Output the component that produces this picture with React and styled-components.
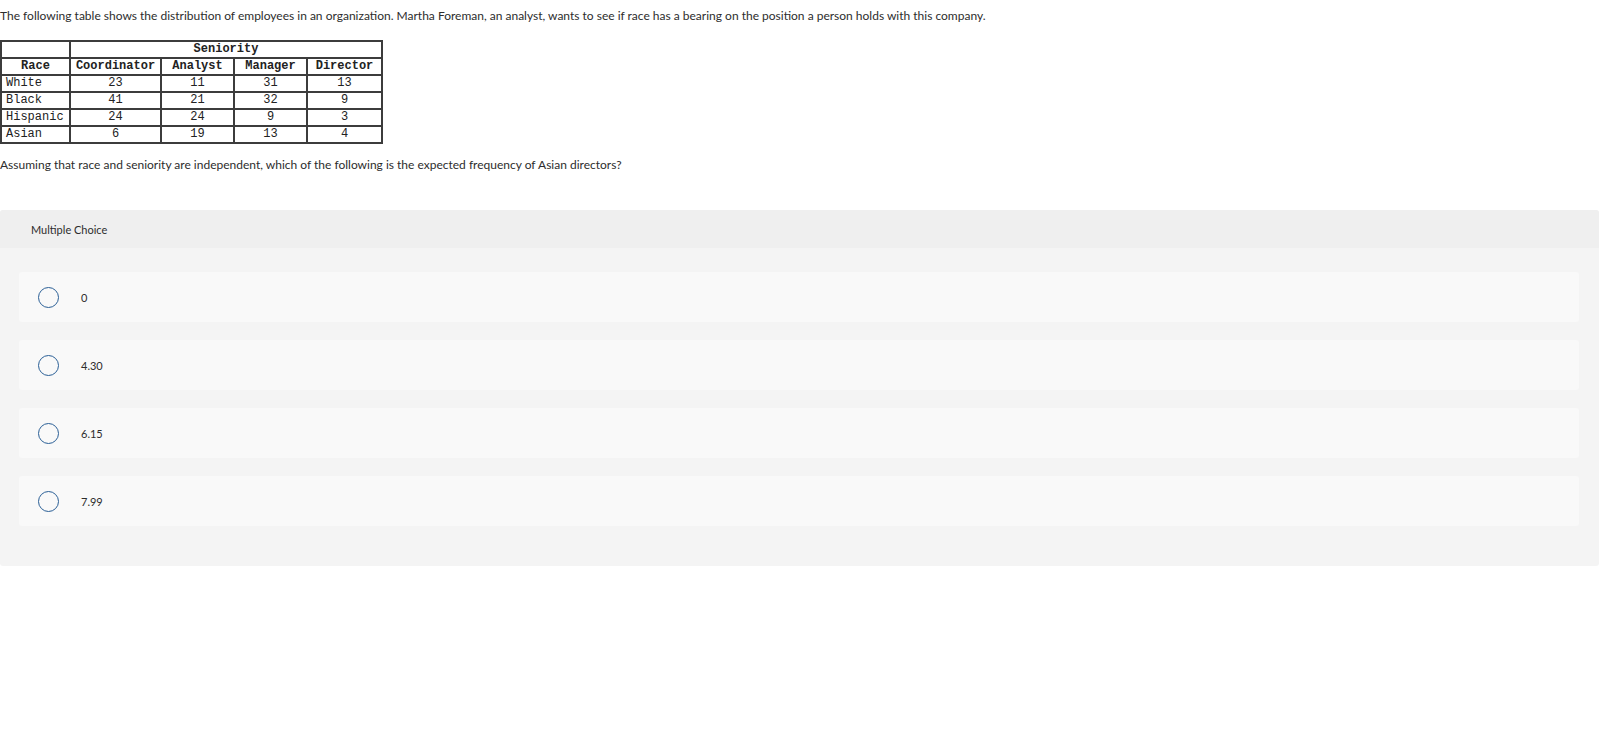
import React from "react";
import styled, { createGlobalStyle } from "styled-components";

const GlobalStyle = createGlobalStyle`
  body {
    margin: 0;
    background: #ffffff;
    color: #2d2d2d;
    font-family: Lato, "Noto Sans", Arial, sans-serif;
  }
`;

const Page = styled.div`
  padding: 0 22px 0 0;
`;

const Intro = styled.p`
  margin: 0;
  padding-top: 7px;
  font-size: 12px;
  line-height: 18px;
`;

const DataTable = styled.table`
  margin-top: 15px;
  border-collapse: collapse;
  border: 2px solid #3c3c3c;
  font-family: "Liberation Mono", "Courier New", monospace;
  font-size: 12px;
  color: #222;
`;

const Cell = styled.td`
  border: 2px solid #3c3c3c;
  height: 15px;
  padding: 0 4px;
  line-height: 15px;
  text-align: ${(p) => (p.$left ? "left" : "center")};
  font-weight: ${(p) => (p.$head ? "bold" : "normal")};
  width: ${(p) => p.$w || "auto"};
`;

const Question = styled.p`
  margin: 0;
  padding-top: 12px;
  font-size: 12px;
  line-height: 18px;
`;

const Panel = styled.section`
  margin-top: 36px;
  background: #f4f4f4;
  border-radius: 3px;
  overflow: hidden;
  padding-bottom: 40px;
`;

const PanelHead = styled.div`
  background: #efefef;
  height: 38px;
  display: flex;
  align-items: center;
  padding-left: 31px;
  font-size: 11px;
`;

const Options = styled.div`
  display: flex;
  flex-direction: column;
  gap: 18px;
  padding: 24px 20px 0 19px;
`;

const Option = styled.label`
  display: flex;
  align-items: center;
  height: 50px;
  background: #f9f9f9;
  border-radius: 3px;
  padding-left: 19px;
  font-size: 11px;
  cursor: pointer;
`;

const Radio = styled.span`
  width: 19px;
  height: 19px;
  border: 1.5px solid #2a5f96;
  border-radius: 50%;
  margin-right: 22px;
  flex-shrink: 0;
`;

const rows = [
  ["White", 23, 11, 31, 13],
  ["Black", 41, 21, 32, 9],
  ["Hispanic", 24, 24, 9, 3],
  ["Asian", 6, 19, 13, 4],
];

const choices = ["0", "4.30", "6.15", "7.99"];

export default function App() {
  return (
    <Page>
      <GlobalStyle />
      <Intro>
        The following table shows the distribution of employees in an
        organization. Martha Foreman, an analyst, wants to see if race has a
        bearing on the position a person holds with this company.
      </Intro>
      <DataTable>
        <tbody>
          <tr>
            <Cell />
            <Cell $head colSpan={4}>
              Seniority
            </Cell>
          </tr>
          <tr>
            <Cell $head $w="59px">Race</Cell>
            <Cell $head $w="81px">Coordinator</Cell>
            <Cell $head $w="63px">Analyst</Cell>
            <Cell $head $w="63px">Manager</Cell>
            <Cell $head $w="65px">Director</Cell>
          </tr>
          {rows.map((r) => (
            <tr key={r[0]}>
              <Cell $left>{r[0]}</Cell>
              <Cell>{r[1]}</Cell>
              <Cell>{r[2]}</Cell>
              <Cell>{r[3]}</Cell>
              <Cell>{r[4]}</Cell>
            </tr>
          ))}
        </tbody>
      </DataTable>
      <Question>
        Assuming that race and seniority are independent, which of the
        following is the expected frequency of Asian directors?
      </Question>
      <Panel>
        <PanelHead>Multiple Choice</PanelHead>
        <Options>
          {choices.map((c) => (
            <Option key={c}>
              <Radio />
              {c}
            </Option>
          ))}
        </Options>
      </Panel>
    </Page>
  );
}
